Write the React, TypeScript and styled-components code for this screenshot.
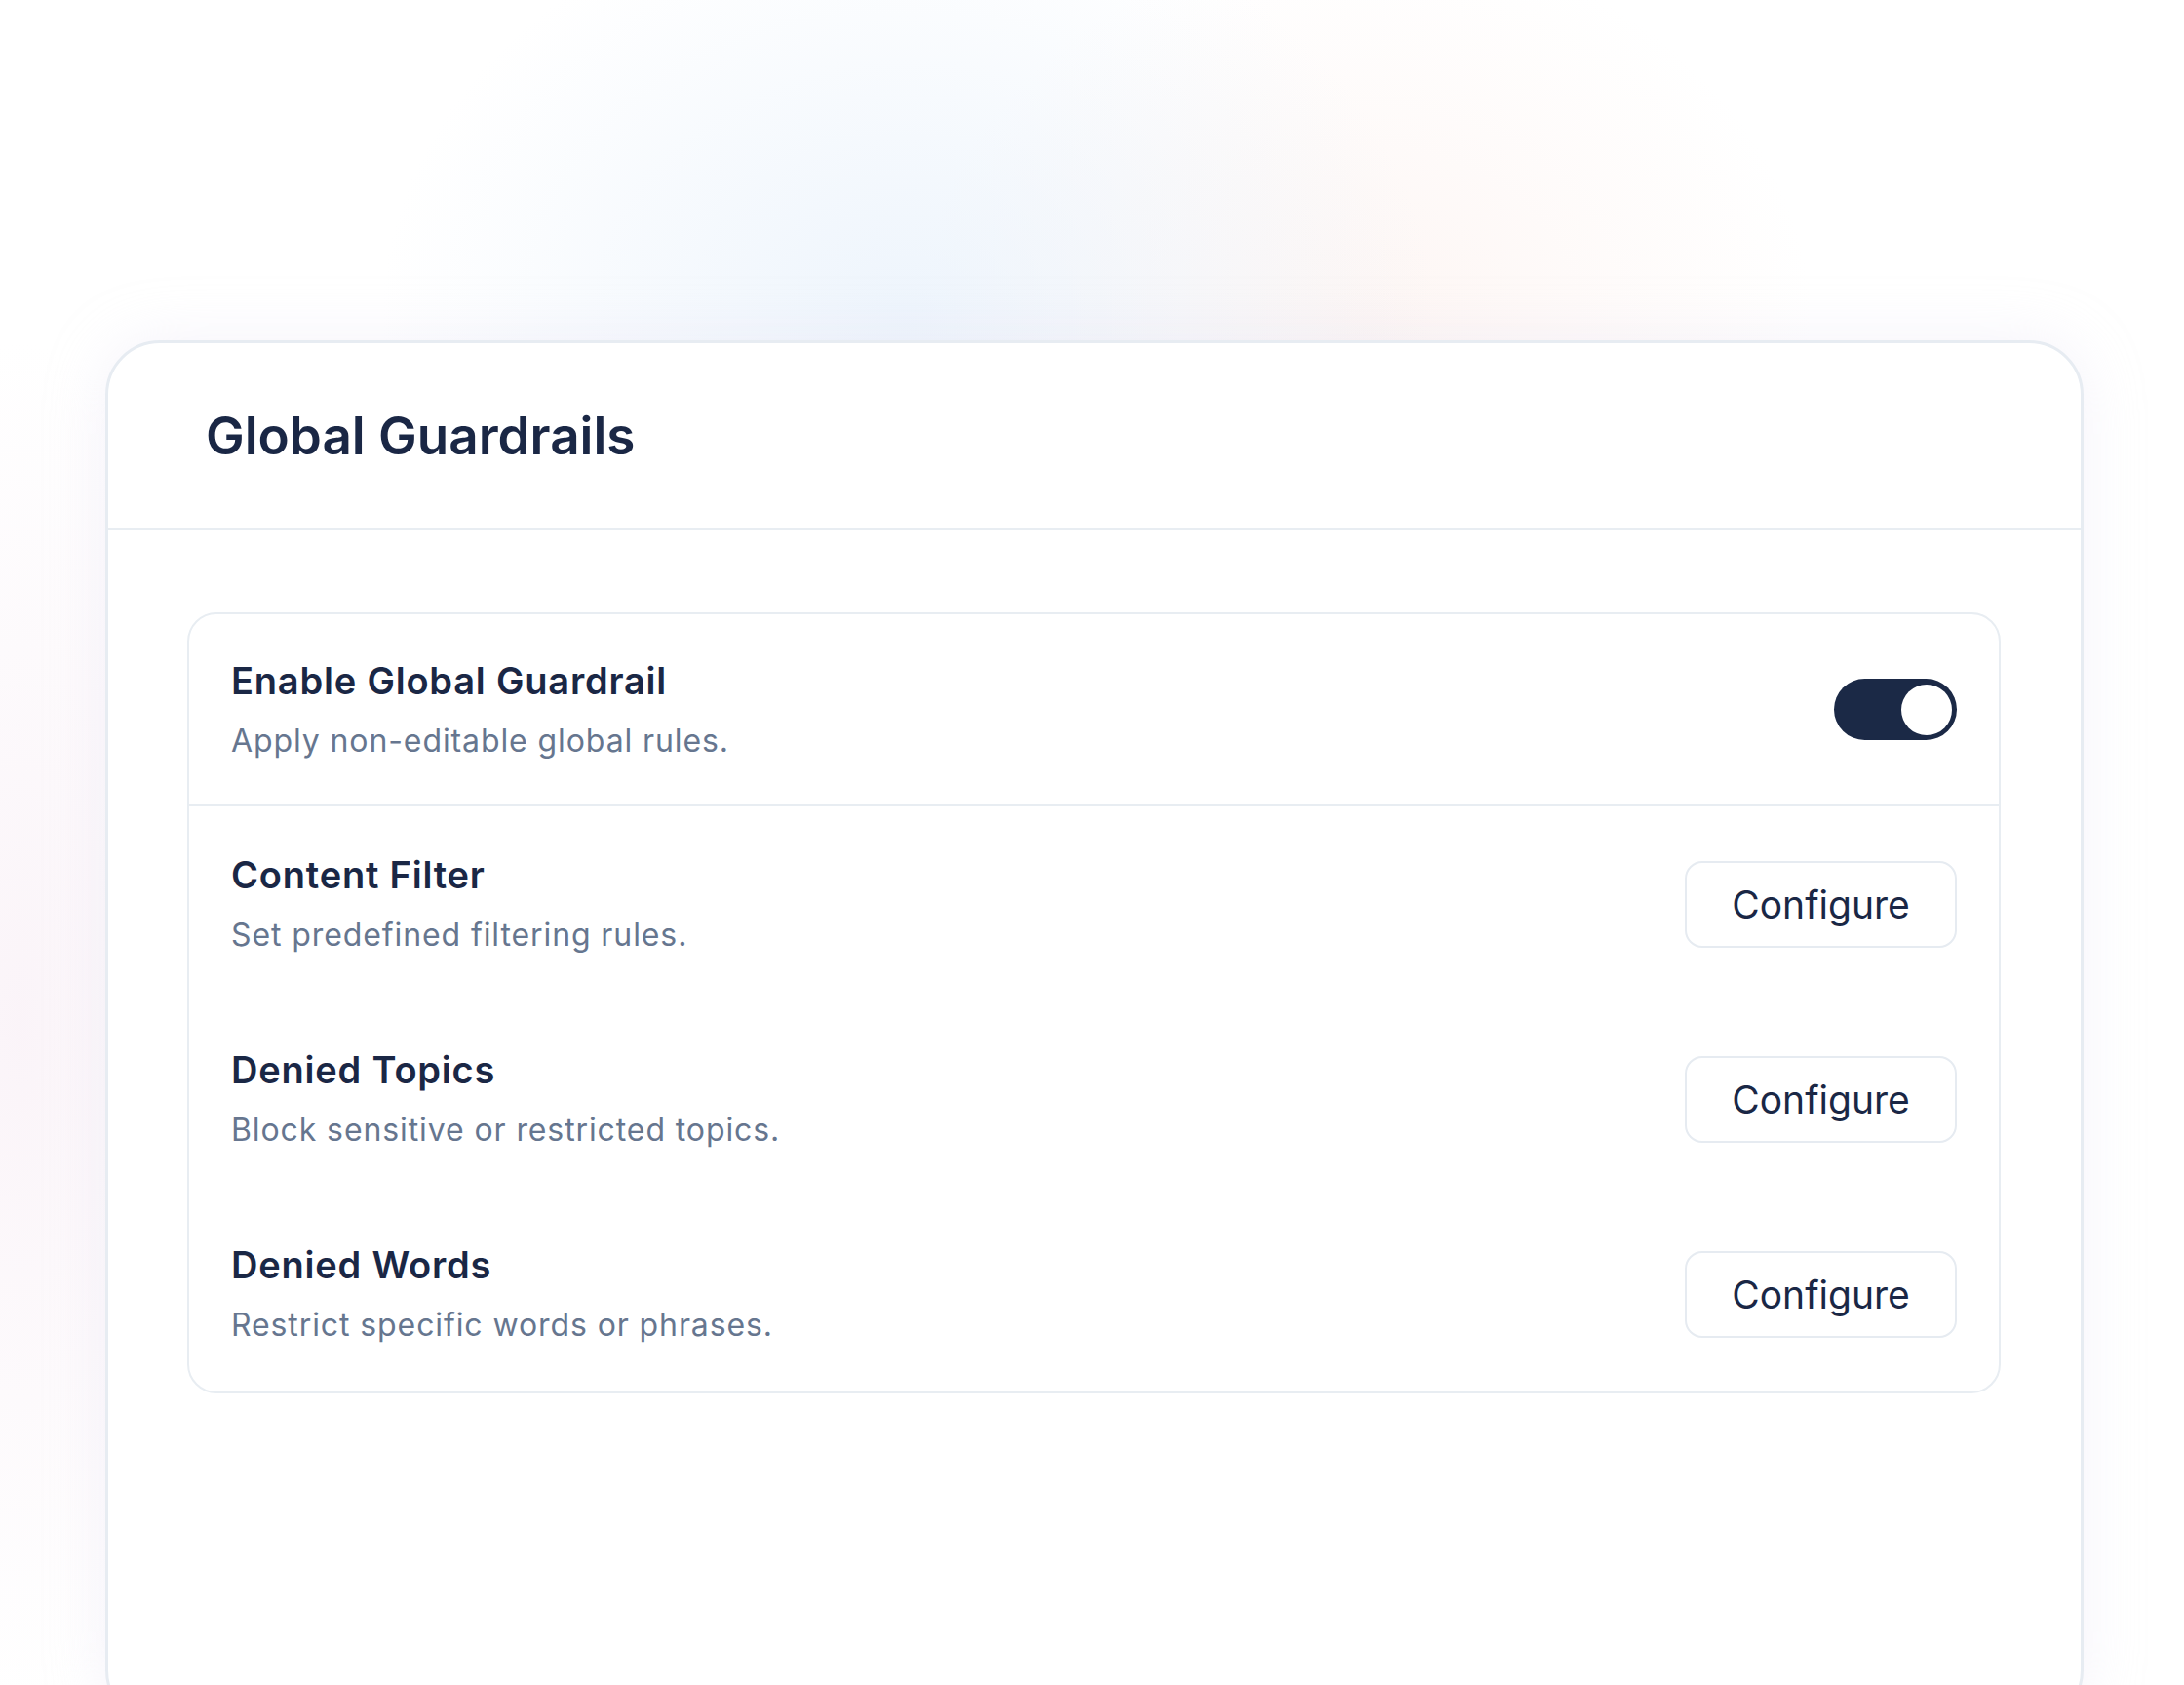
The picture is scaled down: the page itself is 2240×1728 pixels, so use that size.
import styled, { createGlobalStyle } from "styled-components";

const GlobalStyle = createGlobalStyle`
  html, body {
    margin: 0;
    padding: 0;
  }
  body {
    font-family: "Inter", "Noto Sans", sans-serif;
    background-color: #ffffff;
    background-image:
      radial-gradient(ellipse 540px 440px at 930px 330px, rgba(230, 240, 251, 0.7), rgba(255, 255, 255, 0) 100%),
      radial-gradient(ellipse 460px 400px at 1400px 340px, rgba(252, 238, 234, 0.55), rgba(255, 255, 255, 0) 100%),
      radial-gradient(ellipse 260px 700px at 20px 1050px, rgba(248, 238, 245, 0.65), rgba(255, 255, 255, 0) 100%);
  }
`;

type Setting = {
  title: string;
  description: string;
  kind: "toggle" | "configure";
};

const settings: Setting[] = [
  { title: "Enable Global Guardrail", description: "Apply non-editable global rules.", kind: "toggle" },
  { title: "Content Filter", description: "Set predefined filtering rules.", kind: "configure" },
  { title: "Denied Topics", description: "Block sensitive or restricted topics.", kind: "configure" },
  { title: "Denied Words", description: "Restrict specific words or phrases.", kind: "configure" },
];

const App = () => {
  return (
    <>
      <GlobalStyle />
      <Page>
        <Card>
          <CardHeader>
            <Heading>Global Guardrails</Heading>
          </CardHeader>
          <CardBody>
            <SettingsBox>
              {settings.map((s, i) => (
                <SettingRow key={s.title} $first={i === 0}>
                  <SettingText>
                    <SettingTitle>{s.title}</SettingTitle>
                    <SettingDescription>{s.description}</SettingDescription>
                  </SettingText>
                  {s.kind === "toggle" ? (
                    <Toggle role="switch" aria-checked="true">
                      <Knob />
                    </Toggle>
                  ) : (
                    <ConfigureButton>Configure</ConfigureButton>
                  )}
                </SettingRow>
              ))}
            </SettingsBox>
          </CardBody>
        </Card>
      </Page>
    </>
  );
};

const Page = styled.div`
  height: 1728px;
  overflow: hidden;
  padding: 349px 0 0 108px;
  box-sizing: border-box;
`;

const Card = styled.div`
  width: 2029px;
  height: 1420px;
  box-sizing: border-box;
  background: #ffffff;
  border: 3px solid #e7ecf2;
  border-radius: 56px;
  box-shadow: 0 0 60px rgba(226, 222, 240, 0.35);
  display: flex;
  flex-direction: column;
`;

const CardHeader = styled.div`
  height: 189px;
  display: flex;
  align-items: center;
  padding: 0 100px;
  border-bottom: 3px solid #e8edf2;
`;

const Heading = styled.h1`
  margin: 0;
  font-size: 53px;
  font-weight: 600;
  color: #1a2745;
`;

const CardBody = styled.div`
  padding: 84px 82px 0 81px;
`;

const SettingsBox = styled.div`
  border: 2px solid #e8edf2;
  border-radius: 30px;
  display: flex;
  flex-direction: column;
`;

const SettingRow = styled.div<{ $first: boolean }>`
  height: ${(p) => (p.$first ? "195px" : "200px")};
  box-sizing: content-box;
  display: flex;
  align-items: center;
  justify-content: space-between;
  padding: 0 43px;
  border-bottom: ${(p) => (p.$first ? "2px solid #e8edf2" : "none")};
`;

const SettingText = styled.div`
  display: flex;
  flex-direction: column;
  gap: 20px;
`;

const SettingTitle = styled.div`
  font-size: 38px;
  line-height: 44px;
  font-weight: 600;
  letter-spacing: 0.8px;
  color: #1a2745;
`;

const SettingDescription = styled.div`
  font-size: 32px;
  line-height: 40px;
  letter-spacing: 0.9px;
  color: #66768f;
`;

const Toggle = styled.div`
  width: 126px;
  height: 63px;
  border-radius: 32px;
  background: #1b2946;
  display: flex;
  align-items: center;
  justify-content: flex-end;
  padding: 0 5px;
  box-sizing: border-box;
`;

const Knob = styled.div`
  width: 52px;
  height: 52px;
  border-radius: 50%;
  background: #ffffff;
`;

const ConfigureButton = styled.button`
  width: 279px;
  height: 89px;
  box-sizing: border-box;
  border: 2px solid #e6ebf1;
  border-radius: 18px;
  background: #ffffff;
  font-family: "Inter", "Noto Sans", sans-serif;
  font-size: 39px;
  font-weight: 400;
  color: #1a2745;
  cursor: pointer;
`;

export default App;
